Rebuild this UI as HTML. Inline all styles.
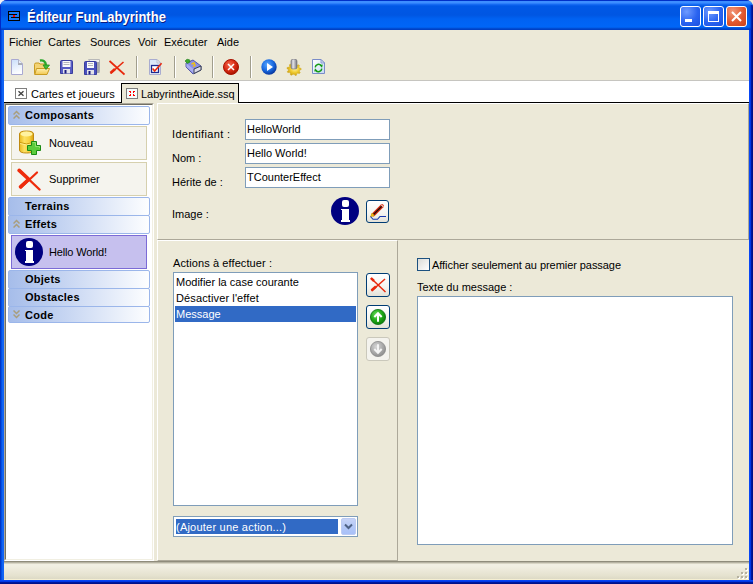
<!DOCTYPE html>
<html><head><meta charset="utf-8">
<style>
*{box-sizing:border-box;margin:0;padding:0}
html,body{width:753px;height:584px;overflow:hidden;background:linear-gradient(90deg,#f2f2f5 50%,#ece9d8 50%)}
body{position:relative;font-family:"Liberation Sans",sans-serif;font-size:11px;color:#000}
.a{position:absolute}
svg.a{z-index:5}
.t{position:absolute;white-space:pre;line-height:13px;font-size:11px}
#win{left:0;top:0;width:753px;height:584px;background:#0831d9;border-radius:7px 7px 0 0;overflow:hidden}
#title{left:0;top:0;width:753px;height:30px;
 background:linear-gradient(180deg,#0030c8 0px,#0030c8 1px,#3d8eff 1px,#3d8eff 3px,#1b70f6 4px,#0058e6 6px,#0056e2 15px,#0062f2 19px,#0066f7 27px,#0057e0 28px,#0040c4 29px,#0040c4 30px)}
#lb{left:0;top:30px;width:4px;height:554px;background:linear-gradient(90deg,#0029b8,#0052e8 40%,#1a6cf8 75%,#0a5af0)}
#rb{left:749px;top:30px;width:4px;height:554px;background:linear-gradient(90deg,#0846f4 12%,#0036e4 40%,#00189e 62%,#00118a 88%)}
#bb{left:0;top:580px;width:753px;height:4px;background:linear-gradient(180deg,#0846f4 12%,#0036e4 40%,#00189e 62%,#00118a 88%)}
#client{left:4px;top:30px;width:745px;height:550px;background:#ece9d8}
.ttl{left:27px;top:8px;font-weight:bold;font-size:14px;color:#fff;line-height:18px;text-shadow:1px 1px 0 #0a1a80;white-space:pre;transform:scaleX(0.93);transform-origin:0 0}
.wbtn{top:6px;width:21px;height:21px;border:1px solid #fff;border-radius:3px;background:radial-gradient(circle at 30% 25%,#6f9bff,#2a63f0 55%,#1a50e0)}
.menu{top:36px}
.sep{top:56px;width:1px;height:22px;background:#a19e8d;box-shadow:1px 0 0 #fff}
.ico{top:59px;width:16px;height:16px}

.hdr{position:absolute;left:8px;width:142px;height:19px;border:1px solid #9bb6ea;border-radius:2px;background:linear-gradient(90deg,#a6bdea,#c6d5f2 40%,#fdfeff 100%)}
.hdr .ht{position:absolute;left:16px;font-weight:bold;font-size:11px;line-height:13px;white-space:pre;letter-spacing:0.25px}
.itm{position:absolute;left:11px;width:136px;height:34px;border:1px solid #d6d0ae;background:#f5f4ee}
.edit{position:absolute;left:245px;width:145px;height:21px;border:1px solid #7f9db9;background:#fff}
.btn{position:absolute;left:366px;width:24px;height:24px;border:1px solid #003c74;border-radius:3px;background:linear-gradient(180deg,#fff,#f4f4f0 60%,#e3e1d7)}
</style></head><body>
<div id="win" class="a">
 <div id="title" class="a"></div>
 <!-- app icon -->
 <svg class="a" style="left:8px;top:11px" width="12" height="10" viewBox="0 0 12 10" shape-rendering="crispEdges">
  <rect x="0" y="0" width="12" height="10" fill="#000"/><rect x="1" y="1" width="10" height="8" fill="#1a7af8"/>
  <rect x="1" y="3" width="8" height="1" fill="#000"/><rect x="5" y="4" width="2" height="2" fill="#f00"/><rect x="3" y="6" width="8" height="1" fill="#000"/>
 </svg>
 <div class="ttl a">Éditeur FunLabyrinthe</div>
 <div class="wbtn a" style="left:680px"><div class="a" style="left:4px;top:12px;width:7px;height:3px;background:#fff"></div></div>
 <div class="wbtn a" style="left:703px"><div class="a" style="left:4px;top:4px;width:11px;height:11px;border:1px solid #fff;border-top-width:3px"></div></div>
 <div class="wbtn a" style="left:726px;background:radial-gradient(circle at 30% 25%,#f2977a,#e0582f 55%,#c8421a)">
  <svg class="a" style="left:4px;top:4px" width="11" height="11"><path d="M1 1L10 10M10 1L1 10" stroke="#fff" stroke-width="2"/></svg>
 </div>
 <div class="a" style="left:0;top:4px;width:1px;height:26px;background:#0028c8"></div><div class="a" style="left:749px;top:5px;width:4px;height:25px;background:linear-gradient(90deg,rgba(8,70,244,0) 0%,rgba(0,40,200,0.5) 40%,#00189e 70%,#00118a 100%)"></div><div id="lb" class="a"></div><div id="rb" class="a"></div><div id="bb" class="a"></div>
 <div id="client" class="a"></div>
</div>

<!-- menu -->
<div class="t menu" style="left:9px">Fichier</div>
<div class="t menu" style="left:48px">Cartes</div>
<div class="t menu" style="left:90px">Sources</div>
<div class="t menu" style="left:138px">Voir</div>
<div class="t menu" style="left:164px">Exécuter</div>
<div class="t menu" style="left:217px">Aide</div>

<!-- toolbar -->
<div id="toolbar"></div>
<div class="sep a" style="left:136px"></div>
<div class="sep a" style="left:174px"></div>
<div class="sep a" style="left:212px"></div>
<div class="sep a" style="left:250px"></div>


<!-- toolbar icons -->
<svg class="a" style="left:10px;top:59px" width="16" height="16" viewBox="0 0 16 16">
 <defs><linearGradient id="gdoc" x1="0" y1="0" x2="0.3" y2="1"><stop offset="0" stop-color="#c9defa"/><stop offset="1" stop-color="#fdfeff"/></linearGradient></defs>
 <path d="M1.5 0.5H8.5L12.5 4.5V15.5H1.5Z" fill="url(#gdoc)" stroke="#a9a9d2"/>
 <path d="M8.5 0.5V4.5H12.5" fill="#e8eef6" stroke="#b0b4c8"/><rect x="8" y="4" width="4" height="2" fill="#a8adb8"/>
</svg>
<svg class="a" style="left:34px;top:59px" width="17" height="17" viewBox="0 0 17 17">
 <defs><linearGradient id="gfold" x1="0" y1="0" x2="0" y2="1"><stop offset="0" stop-color="#fff0b0"/><stop offset="1" stop-color="#f2c850"/></linearGradient></defs>
 <path d="M0.5 5.5Q0.5 4 2 4H5L6 5H11V15.5H1.5Q0.5 15.5 0.5 14.5Z" fill="#f3d374" stroke="#c99c22"/>
 <path d="M2.5 9.5H15.5L13 15.5H0.8Z" fill="url(#gfold)" stroke="#c99c22"/>
 <path d="M6 1.5Q11 0.5 12 6" fill="none" stroke="#2ca82c" stroke-width="2.4"/>
 <path d="M9 6H15.5L12 10.5Z" fill="#44c034" stroke="#1f8a1f" stroke-width="0.8"/>
</svg>
<svg class="a" style="left:60px;top:60px" width="13" height="14" viewBox="0 0 13 14">
 <path d="M0.5 1.5Q0.5 0.5 1.5 0.5H11.5Q12.5 0.5 12.5 1.5V13.5H0.5Z" fill="#585cc4" stroke="#3a3e9e"/>
 <rect x="2.5" y="1" width="8" height="6" fill="#fafafa"/><rect x="3.5" y="2" width="6" height="1" fill="#b4b4bc"/><rect x="3.5" y="4" width="6" height="1" fill="#b4b4bc"/>
 <rect x="3" y="9" width="7" height="4.5" fill="#e4e4ea"/><rect x="4.5" y="10" width="2" height="3.5" fill="#1c1c80"/>
</svg>
<svg class="a" style="left:84px;top:59px" width="16" height="16" viewBox="0 0 16 16">
 <path d="M4.5 0.5H15.5V12.5H14Z" fill="#f0f0f0" stroke="#b8b8b8"/><rect x="13" y="3" width="2.5" height="11" fill="#a8a8a8"/>
 <path d="M0.5 3.5Q0.5 2.5 1.5 2.5H11.5Q12.5 2.5 12.5 3.5V15.5H0.5Z" fill="#4a50bc" stroke="#3a3e9e"/>
 <rect x="3" y="3" width="7" height="6" fill="#fafafa"/><rect x="4" y="4" width="5" height="1" fill="#b4b4bc"/><rect x="4" y="6" width="5" height="1" fill="#b4b4bc"/>
 <rect x="3" y="11" width="7" height="4.5" fill="#e2e2e8"/><rect x="4.5" y="12" width="2" height="3.5" fill="#1c1c80"/>
</svg>
<svg class="a" style="left:109px;top:60px" width="16" height="16" viewBox="0 0 16 16">
 <path d="M0.5 1L15.5 14.5" stroke="#e8280c" stroke-width="1.8"/><path d="M14.5 2L1.5 13.5" stroke="#e8280c" stroke-width="1.6"/><path d="M6 9L1.5 13" stroke="#e8280c" stroke-width="2.6"/>
</svg>
<svg class="a" style="left:149px;top:59px" width="14" height="16" viewBox="0 0 14 16">
 <defs><linearGradient id="gck" x1="0" y1="0" x2="0" y2="1"><stop offset="0" stop-color="#d6e4f8"/><stop offset="1" stop-color="#f4f8fd"/></linearGradient></defs>
 <path d="M0.5 0.5H8L11.5 4V15.5H0.5Z" fill="url(#gck)" stroke="#a9acd0"/><path d="M8 0.5V4H11.5Z" fill="#f0f2f6" stroke="#b4b8cc" stroke-width="0.8"/>
 <rect x="2.5" y="6.5" width="7" height="7" fill="#fff" stroke="#1c2a90" stroke-width="1.3"/>
 <path d="M3.6 9.6L5.6 12L12.6 4.2" fill="none" stroke="#e82a10" stroke-width="1.6"/>
</svg>
<svg class="a" style="left:184px;top:58px" width="18" height="17" viewBox="0 0 18 17">
 <path d="M2 5L9 2L17 8V12L9 16L2 9Z" fill="#8a8ee6" stroke="#4c50a0" stroke-width="0.9"/>
 <path d="M2.5 5.5L10 11.5V15.5L2.5 9Z" fill="#aaaef0"/>
 <path d="M10 11L17 8V12L10 15.5Z" fill="#dcdcea" stroke="#2c3444" stroke-width="0.9"/>
 <path d="M1 3L3 1.2L5.5 1.8L6 4L3.5 5.5Z" fill="#3aa82a" stroke="#1c7a18" stroke-width="0.6"/>
 <path d="M7.5 6L10 5L11 7.5L9 8.5" fill="none" stroke="#f0c010" stroke-width="1.5"/>
</svg>
<svg class="a" style="left:223px;top:59px" width="16" height="16" viewBox="0 0 16 16">
 <defs><radialGradient id="gred" cx="0.4" cy="0.35" r="0.65"><stop offset="0" stop-color="#f46a50"/><stop offset="0.6" stop-color="#d82a14"/><stop offset="1" stop-color="#a81400"/></radialGradient></defs>
 <circle cx="8" cy="8" r="7.5" fill="url(#gred)" stroke="#a81200" stroke-width="1"/>
 <path d="M5 5L11 11M11 5L5 11" stroke="#fff" stroke-width="1.5"/>
</svg>
<svg class="a" style="left:261px;top:59px" width="16" height="16" viewBox="0 0 16 16">
 <defs><radialGradient id="gblue" cx="0.4" cy="0.35" r="0.65"><stop offset="0" stop-color="#5aa8ff"/><stop offset="0.6" stop-color="#1a6ae0"/><stop offset="1" stop-color="#0838a0"/></radialGradient></defs>
 <circle cx="8" cy="8" r="7.7" fill="url(#gblue)"/>
 <path d="M6 4L12 8L6 12Z" fill="#fff"/>
</svg>
<svg class="a" style="left:286px;top:59px" width="16" height="17" viewBox="0 0 16 17">
 <defs><radialGradient id="ggold" cx="0.55" cy="0.45" r="0.6"><stop offset="0" stop-color="#fff0a0"/><stop offset="0.5" stop-color="#f0cc30"/><stop offset="1" stop-color="#c89a10"/></radialGradient>
 <linearGradient id="gcyl" x1="0" y1="0" x2="1" y2="0"><stop offset="0" stop-color="#8a8a92"/><stop offset="0.35" stop-color="#e4e4ea"/><stop offset="1" stop-color="#76767e"/></linearGradient></defs>
 <path d="M8.00 4.38L9.25 4.47L9.92 6.03L10.80 6.38L12.63 5.81L13.52 6.57L12.85 8.12L13.26 8.87L15.09 9.44L15.20 10.50L13.51 11.33L13.26 12.13L14.24 13.56L13.52 14.43L11.60 14.15L10.80 14.62L10.46 16.25L9.25 16.53L8.00 15.26L7.03 15.19L5.54 16.25L4.40 15.80L4.40 14.15L3.71 13.56L1.76 13.56L1.23 12.59L2.49 11.33L2.40 10.50L0.91 9.44L1.23 8.41L3.15 8.12L3.71 7.44L3.37 5.81L4.40 5.20L6.08 6.03L7.03 5.81Z" fill="url(#ggold)" stroke="#d0a818" stroke-width="0.5"/>
 <path d="M5 2Q5 0 8 0Q11 0 11 2V9Q11 10 8 10Q5 10 5 9Z" fill="url(#gcyl)" stroke="#6c6c74" stroke-width="0.6"/>
</svg>
<svg class="a" style="left:312px;top:59px" width="13" height="15" viewBox="0 0 13 15">
 <defs><linearGradient id="grf" x1="0" y1="0" x2="1" y2="1"><stop offset="0" stop-color="#ffffff"/><stop offset="1" stop-color="#c4daf4"/></linearGradient></defs>
 <path d="M0.5 0.5H9L12.5 4V14.5H0.5Z" fill="url(#grf)" stroke="#7a8cc8"/>
 <path d="M9 0.5V4H12.5Z" fill="#d4e2f6" stroke="#7a8cc8" stroke-width="0.8"/>
 <path d="M3.2 8.3A3.4 3.4 0 0 1 9.2 6.6" fill="none" stroke="#149a14" stroke-width="1.5"/>
 <path d="M7.6 6.2L10.8 5.6L10 8.8Z" fill="#149a14"/>
 <path d="M9.8 9.6A3.4 3.4 0 0 1 3.8 11.4" fill="none" stroke="#149a14" stroke-width="1.5"/>
 <path d="M5.4 11.8L2.2 12.4L3 9.2Z" fill="#149a14"/>
</svg>
<!-- tabs strip -->
<div class="a" style="left:4px;top:80px;width:745px;height:1px;background:#c6c5c0"></div>
<div class="a" style="left:4px;top:81px;width:745px;height:21px;background:#fff"></div>
<div class="a" style="left:4px;top:102px;width:745px;height:1px;background:#000"></div>
<div class="a" style="left:121px;top:83px;width:118px;height:20px;background:#ece9d8;border:1px solid #000;border-bottom:0"></div>


<div class="t" style="left:31px;top:88px">Cartes et joueurs</div>
<div class="t" style="left:141px;top:88px">LabyrintheAide.ssq</div>
<!-- tab icons -->
<svg class="a" style="left:15px;top:88px" width="12" height="11" viewBox="0 0 12 11">
 <rect x="0.5" y="0.5" width="11" height="10" fill="#fff" stroke="#7f7f7f"/>
 <path d="M3.5 3.2L8.5 7.8M8.5 3.2L3.5 7.8" stroke="#404040" stroke-width="1.3"/>
</svg>
<svg class="a" style="left:126px;top:88px" width="12" height="11" viewBox="0 0 12 11">
 <rect x="0.5" y="0.5" width="11" height="10" fill="#f6fcfc" stroke="#7f7f7f"/>
 <path d="M3 3H5V5H4V4H3ZM9 3H7V5H8V4H9ZM3 8H5V6H4V7H3ZM9 8H7V6H8V7H9Z" fill="#f00" shape-rendering="crispEdges"/>
</svg>
<!-- main area -->

<!-- sidebar -->
<div class="a" style="left:4px;top:103px;width:150px;height:458px;background:#fff;border-style:solid;border-width:2px;border-color:#aca899 #fff #fff #aca899"></div>
<div class="a" style="left:5px;top:104px;width:148px;height:456px;border-style:solid;border-width:1px;border-color:#716f64 #f1efe2 #f1efe2 #716f64"></div>

<svg class="a" style="left:13px;top:110px" width="8" height="9" viewBox="0 0 8 9"><path d="M0.5 4.5L3.5 1.5L6.5 4.5M0.5 8.5L3.5 5.5L6.5 8.5" stroke="#a99e7c" stroke-width="1.5" fill="none"/></svg><svg class="a" style="left:13px;top:219px" width="8" height="9" viewBox="0 0 8 9"><path d="M0.5 4.5L3.5 1.5L6.5 4.5M0.5 8.5L3.5 5.5L6.5 8.5" stroke="#a99e7c" stroke-width="1.5" fill="none"/></svg><svg class="a" style="left:13px;top:310px" width="8" height="9" viewBox="0 0 8 9"><path d="M0.5 0.5L3.5 3.5L6.5 0.5M0.5 4.5L3.5 7.5L6.5 4.5" stroke="#a99e7c" stroke-width="1.5" fill="none"/></svg><div class="hdr" style="top:106px;height:19px"><div class="ht" style="top:2px">Composants</div></div>
<div class="itm" style="top:126px"></div>
<div class="t" style="left:49px;top:137px">Nouveau</div>
<div class="itm" style="top:162px"></div>
<div class="t" style="left:49px;top:173px">Supprimer</div>

<svg class="a" style="left:18px;top:130px" width="24" height="26" viewBox="0 0 24 26">
 <defs><linearGradient id="gdb" x1="0" y1="0" x2="1" y2="0"><stop offset="0" stop-color="#e8b820"/><stop offset="0.35" stop-color="#fde060"/><stop offset="0.7" stop-color="#f6d040"/><stop offset="1" stop-color="#d8a010"/></linearGradient></defs>
 <path d="M1.5 4Q1.5 1 8.5 1Q15.5 1 15.5 4V20Q15.5 23 8.5 23Q1.5 23 1.5 20Z" fill="url(#gdb)" stroke="#c08a10"/>
 <ellipse cx="8.5" cy="4" rx="6" ry="2.4" fill="#fff2a0"/>
 <path d="M2 12.5Q8.5 15.5 15 12.5" fill="none" stroke="#c8980c" stroke-width="1"/>
 <path d="M2 13.5Q8.5 16.5 15 13.5" fill="none" stroke="#fff0a0" stroke-width="0.8"/>
 <path d="M13.5 11.5H18.5V15.5H22.5V20.5H18.5V24.5H13.5V20.5H9.5V15.5H13.5Z" fill="#5ccc3c" stroke="#1a8a14" stroke-width="1"/>
 <path d="M14.5 12.5H17.5V16.5H21.5V18" fill="none" stroke="#9ae87a" stroke-width="0.8"/>
</svg>
<svg class="a" style="left:17px;top:168px" width="24" height="23" viewBox="0 0 24 23">
 <path d="M2 2L22.5 21.5" stroke="#ee2c0c" stroke-width="2.4" stroke-linecap="round"/>
 <path d="M2.2 2.4L11.5 11" stroke="#ee2c0c" stroke-width="3.6" stroke-linecap="round"/>
 <path d="M20 4.5L4 19.5" stroke="#ee2c0c" stroke-width="2.2" stroke-linecap="round"/>
 <path d="M11 12L3.5 18.8" stroke="#ee2c0c" stroke-width="3.6" stroke-linecap="round"/>
</svg>
<svg class="a" style="left:15px;top:238px" width="28" height="28" viewBox="0 0 28 28">
 <circle cx="14" cy="14" r="14" fill="#000080"/>
 <rect x="11" y="3" width="7" height="7" rx="2" fill="#fff"/>
 <path d="M10 12H18V23H19V25H10V23H11V13H10Z" fill="#fff"/>
</svg>
<div class="hdr" style="top:197px;height:19px"><div class="ht" style="top:2px">Terrains</div></div>
<div class="hdr" style="top:215px;height:19px"><div class="ht" style="top:2px">Effets</div></div>
<div class="itm" style="top:235px;border-color:#7b6bd6;background:#c6c0ee"></div>
<div class="t" style="left:49px;top:246px;letter-spacing:-0.15px">Hello World!</div>
<div class="hdr" style="top:270px;height:19px"><div class="ht" style="top:2px">Objets</div></div>
<div class="hdr" style="top:288px;height:19px"><div class="ht" style="top:2px">Obstacles</div></div>
<div class="hdr" style="top:306px;height:17px"><div class="ht" style="top:2px">Code</div></div>

<!-- main panel -->
<div class="a" style="left:157px;top:103px;width:592px;height:137px;border-style:solid;border-width:1px;border-color:#fff #aca899 #aca899 #fff"></div>
<div class="a" style="left:157px;top:240px;width:241px;height:321px;border-style:solid;border-width:1px;border-color:#fff #aca899 #aca899 #fff"></div>
<div class="a" style="left:398px;top:240px;width:351px;height:322px;border-style:solid;border-width:0 0 1px 0;border-color:#aca899"></div>

<div class="t" style="left:172px;top:128px;letter-spacing:0.35px">Identifiant :</div>
<div class="t" style="left:172px;top:152px">Nom :</div>
<div class="t" style="left:172px;top:176px">Hérite de :</div>
<div class="t" style="left:172px;top:208px">Image :</div>
<div class="edit" style="top:119px"><div class="t" style="left:1px;top:3px">HelloWorld</div></div>
<div class="edit" style="top:143px"><div class="t" style="left:1px;top:3px">Hello World!</div></div>
<div class="edit" style="top:167px"><div class="t" style="left:1px;top:3px">TCounterEffect</div></div>
<div class="btn" style="top:200px;width:23px;height:23px"></div>

<svg class="a" style="left:331px;top:197px" width="28" height="28" viewBox="0 0 28 28">
 <circle cx="14" cy="14" r="14" fill="#000080"/>
 <rect x="11" y="3" width="7" height="7" rx="2" fill="#fff"/>
 <path d="M10 12H18V23H19V25H10V23H11V13H10Z" fill="#fff"/>
</svg>
<svg class="a" style="left:366px;top:200px" width="23" height="23" viewBox="0 0 23 23">
 <path d="M7.5 14.5L16 6" stroke="#d42810" stroke-width="3.8" stroke-linecap="round"/>
 <path d="M7.5 14.5L16 6" stroke="#200a06" stroke-width="1.2"/>
 <path d="M15.2 4.8L17.6 7.2" stroke="#f4b8a8" stroke-width="1.3"/>
 <path d="M4.5 17L6 13L8.5 15.5Z" fill="#f0c010" stroke="#c89000" stroke-width="0.5"/>
 <path d="M4.5 16.5L7 19.3H11.5L14 16.5H20" fill="none" stroke="#1838b0" stroke-width="1.1"/>
</svg>
<svg class="a" style="left:370px;top:277px" width="16" height="16" viewBox="0 0 16 16">
 <path d="M0.8 1L15.5 15" stroke="#e8280c" stroke-width="1.5"/><path d="M15 2L1.5 14" stroke="#e8280c" stroke-width="1.5"/><path d="M6 9.5L1.5 13.5" stroke="#e8280c" stroke-width="2.6"/><path d="M1 1.2L4 4" stroke="#e8280c" stroke-width="2.4"/>
</svg>
<svg class="a" style="left:370px;top:309px" width="16" height="16" viewBox="0 0 16 16">
 <defs><radialGradient id="ggr" cx="0.4" cy="0.35" r="0.7"><stop offset="0" stop-color="#6ee060"/><stop offset="0.55" stop-color="#20a818"/><stop offset="1" stop-color="#0a7808"/></radialGradient></defs>
 <circle cx="8" cy="8" r="7.6" fill="url(#ggr)" stroke="#0a7010" stroke-width="0.8"/>
 <path d="M4.3 8L8 4.2L11.7 8M8 4.5V12.8" fill="none" stroke="#fff" stroke-width="2"/>
</svg>
<svg class="a" style="left:370px;top:341px" width="16" height="16" viewBox="0 0 16 16">
 <defs><radialGradient id="ggy" cx="0.4" cy="0.35" r="0.7"><stop offset="0" stop-color="#d8d8d8"/><stop offset="0.6" stop-color="#a8a8a8"/><stop offset="1" stop-color="#8a8a8a"/></radialGradient></defs>
 <circle cx="8" cy="8" r="7.6" fill="url(#ggy)" stroke="#8a8a8a" stroke-width="0.8"/>
 <path d="M4.3 8L8 11.8L11.7 8M8 11.5V3.2" fill="none" stroke="#f4f4f4" stroke-width="2"/>
</svg>
<svg class="a" style="left:344px;top:523px" width="9" height="8" viewBox="0 0 9 8">
 <path d="M1 1.5L4.5 5L8 1.5" fill="none" stroke="#4d6185" stroke-width="2"/>
</svg>
<div class="t" style="left:173px;top:257px;letter-spacing:0.1px">Actions à effectuer :</div>
<div class="a" style="left:173px;top:272px;width:185px;height:234px;border:1px solid #7f9db9;background:#fff"></div>
<div class="t" style="left:176px;top:276px">Modifier la case courante</div>
<div class="t" style="left:176px;top:292px;letter-spacing:0.12px">Désactiver l'effet</div>
<div class="a" style="left:175px;top:306px;width:181px;height:16px;background:#316ac5"></div>
<div class="t" style="left:176px;top:308px;color:#fff">Message</div>
<div class="btn" style="top:273px"></div>
<div class="btn" style="top:305px"></div>
<div class="btn" style="top:337px;border-color:#cac8bb;background:#f4f3ee"></div>
<div class="a" style="left:173px;top:516px;width:185px;height:21px;border:1px solid #7f9db9;background:#fff"></div>
<div class="a" style="left:176px;top:519px;width:162px;height:15px;background:#316ac5"></div>
<div class="t" style="left:176px;top:521px;color:#fff;letter-spacing:0.22px">(Ajouter une action...)</div>
<div class="a" style="left:341px;top:518px;width:15px;height:17px;border-radius:2px;background:linear-gradient(180deg,#c6d3f7,#b4c8f6 50%,#a8c0f8);border:1px solid #bccbf3"></div>
<div class="a" style="left:417px;top:258px;width:13px;height:13px;border:1px solid #1c5180;background:linear-gradient(135deg,#dcdcd7,#fff)"></div>
<div class="t" style="left:432px;top:259px;letter-spacing:-0.06px">Afficher seulement au premier passage</div>
<div class="t" style="left:417px;top:281px">Texte du message :</div>
<div class="a" style="left:417px;top:296px;width:316px;height:249px;border:1px solid #7f9db9;background:#fff"></div>



<!-- status bar -->
<div class="a" style="left:4px;top:561px;width:745px;height:1px;background:#8f8c7c"></div>
<div class="a" style="left:4px;top:562px;width:745px;height:18px;background:linear-gradient(180deg,#b6b3a3 0px,#b6b3a3 1px,#d8d5c5 1px,#d8d5c5 2px,#f1efe3 2px,#f1efe3 4px,#ebe8d8 9px,#e4e1ce 14px,#dcd9c5 17px,#f4eed2 17px)"></div>
<!-- grip --><div class="a" style="left:746px;top:569px;width:2px;height:2px;background:#fff"></div><div class="a" style="left:745px;top:568px;width:2px;height:2px;background:#b5b19f"></div><div class="a" style="left:742px;top:573px;width:2px;height:2px;background:#fff"></div><div class="a" style="left:741px;top:572px;width:2px;height:2px;background:#b5b19f"></div><div class="a" style="left:746px;top:573px;width:2px;height:2px;background:#fff"></div><div class="a" style="left:745px;top:572px;width:2px;height:2px;background:#b5b19f"></div><div class="a" style="left:738px;top:577px;width:2px;height:2px;background:#fff"></div><div class="a" style="left:737px;top:576px;width:2px;height:2px;background:#b5b19f"></div><div class="a" style="left:742px;top:577px;width:2px;height:2px;background:#fff"></div><div class="a" style="left:741px;top:576px;width:2px;height:2px;background:#b5b19f"></div><div class="a" style="left:746px;top:577px;width:2px;height:2px;background:#fff"></div><div class="a" style="left:745px;top:576px;width:2px;height:2px;background:#b5b19f"></div>
</body></html>
